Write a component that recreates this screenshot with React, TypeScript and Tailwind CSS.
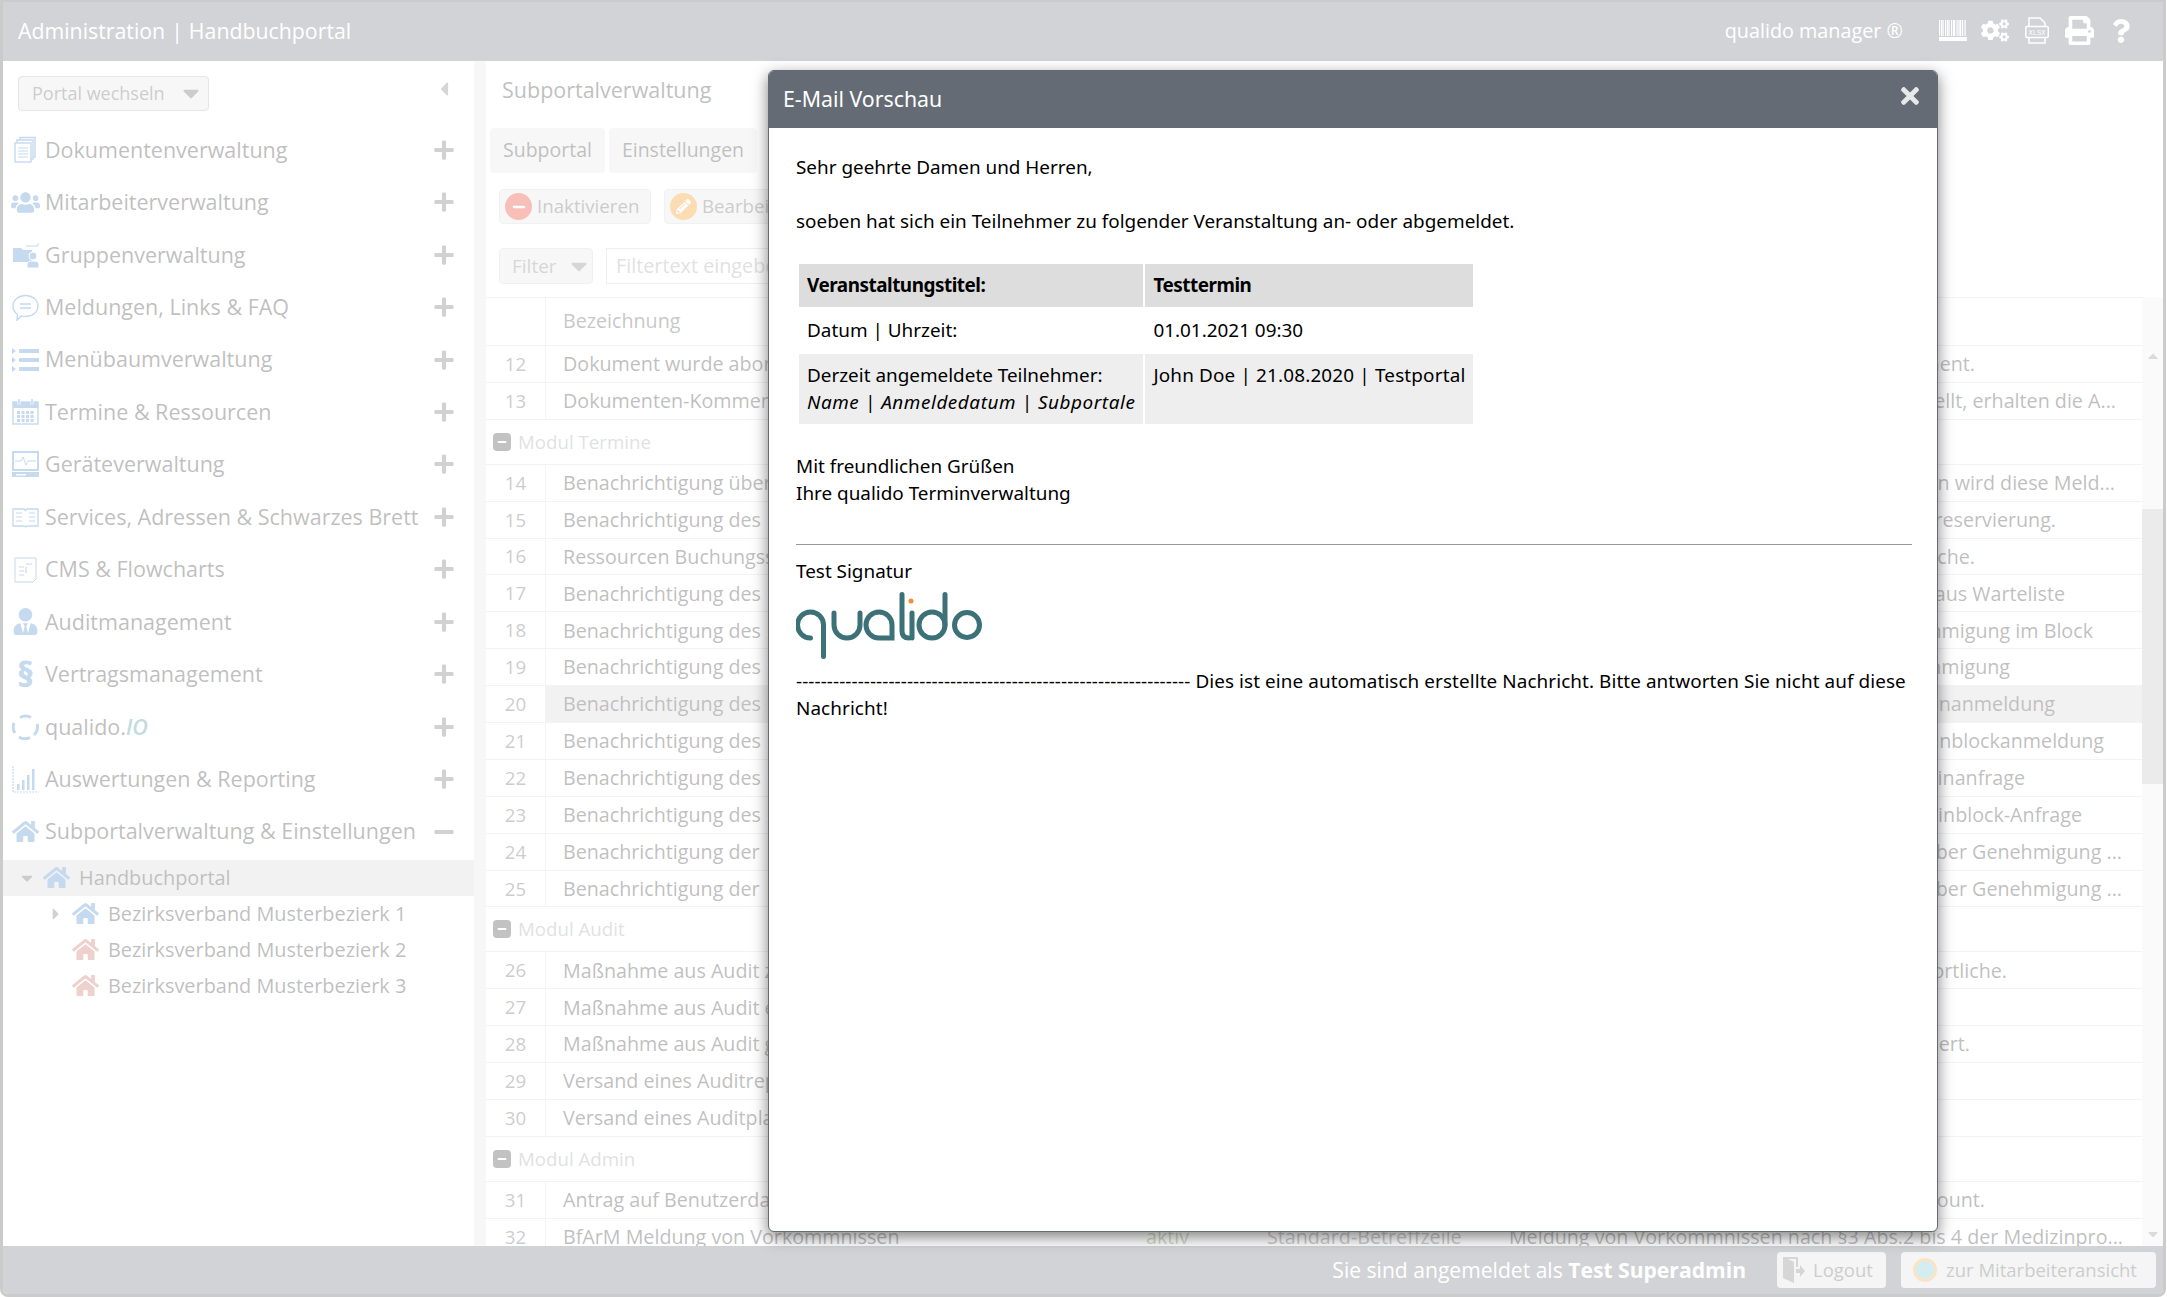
import React from "react";
import { FaUsers, FaHome, FaUserTie, FaCogs, FaPrint, FaQuestion, FaTimes, FaCaretDown, FaCaretLeft, FaCaretRight, FaCaretUp, FaPencilAlt, FaMinus, FaPlus } from "react-icons/fa";

const Svg = ({ children, className = "" }: { children: React.ReactNode; className?: string }) => (
  <svg viewBox="0 0 27 27" className={"h-[27px] w-[27px] text-[#3e80c9] " + className} fill="none" stroke="currentColor" strokeWidth="1.4">{children}</svg>
);

const DocIcon = () => (
  <Svg>
    <path d="M8 4V1.5h15V21h-2M5 7V4h16v19h-2" />
    <rect x="3" y="7" width="16" height="19" fill="white" />
    <path d="M6 12h10M6 15h10M6 18h10M6 21h10" strokeWidth="1" />
  </Svg>
);
const FolderIcon = () => (
  <Svg>
    <path d="M1 7h8l2 2h9v12H1z" fill="currentColor" stroke="none" />
    <path d="M14 5h12V2" strokeWidth="1" />
    <circle cx="21" cy="15" r="4" fill="currentColor" stroke="white" strokeWidth="1" />
    <path d="M15 27v-4q0-3 6-3t6 3v4z" fill="currentColor" stroke="white" strokeWidth="1" />
  </Svg>
);
const ChatIcon = () => (
  <Svg>
    <path d="M13.5 1.5c7 0 12.5 4.500 12.500 10.500S20.500 22.500 13.500 22.500c-1.500 0-3-.2-4-.6L5 26l.5-5.500C2.800 18.500 1 15.500 1 12 1 6 6.500 1.500 13.500 1.500z" />
    <path d="M8 10h11M8 14h11" />
  </Svg>
);
const ListIcon = () => (
  <Svg>
    <g fill="currentColor" stroke="none">
      <rect x="7" y="3" width="20" height="4" /><rect x="7" y="12" width="20" height="4" /><rect x="7" y="21" width="20" height="4" />
      <path d="M0 2l4 3-4 3zM0 11l4 3-4 3zM0 20l4 3-4 3z" />
    </g>
  </Svg>
);
const CalIcon = () => (
  <Svg>
    <rect x="1" y="4" width="25" height="22" />
    <rect x="1" y="4" width="25" height="6" fill="currentColor" stroke="none" />
    <path d="M7 1v6M20 1v6" stroke="white" strokeWidth="3" />
    <path d="M7 1v6M20 1v6" strokeWidth="1.500" />
    <g fill="currentColor" stroke="none">
      {[5, 9.500, 14, 18.500].map((x) => [13, 17, 21].map((y) => <rect key={x + "-" + y} x={x} y={y} width="3" height="3" />))}
    </g>
  </Svg>
);
const MonitorIcon = () => (
  <Svg>
    <rect x="1" y="1" width="25" height="18" strokeWidth="2" />
    <path d="M3 10h6l2-4 3 8 2-4h8" strokeWidth="1" />
    <rect x="0" y="21" width="27" height="5" fill="currentColor" stroke="none" />
    <rect x="4" y="23" width="10" height="1.500" fill="white" stroke="none" />
  </Svg>
);
const BookIcon = () => (
  <Svg>
    <path d="M1 6h11l1.500 1.500L15 6h11v17H15l-1.500 1L12 23H1z" />
    <path d="M4 10h6M4 14h6M4 18h6M17 10h6M17 14h6M17 18h6" strokeWidth="1.200" />
  </Svg>
);
const FlowIcon = () => (
  <Svg>
    <path d="M3 2h21v21l-3 3H3z" strokeWidth="1" />
    <path d="M7 11h5M7 15h5M7 19h5M14 8h6M14 11l0 6" strokeWidth="1.200" />
  </Svg>
);
const IoIcon = () => (
  <Svg>
    <path d="M8 4.500a11 11 0 0 1 11 0M25 11a11 11 0 0 1-3 11M18 24.500a11 11 0 0 1-11-.5M3 20a11 11 0 0 1-1-10" strokeWidth="3" />
  </Svg>
);
const ChartIcon = () => (
  <Svg>
    <path d="M1 0v26h26" strokeWidth="1.200" strokeDasharray="2 1" />
    <g fill="currentColor" stroke="none">
      <rect x="5" y="18" width="2.500" height="6" /><rect x="10" y="14" width="2.500" height="10" /><rect x="15" y="9" width="2.500" height="15" /><rect x="20" y="3" width="2.500" height="21" />
    </g>
  </Svg>
);
const Para = () => <span className="block w-[27px] text-center font-['Open_Sans',sans-serif] text-[34px] leading-[27px] font-extrabold text-[#3e80c9]">§</span>;
const B = (I: any, cls = "h-[27px] w-[27px]") => <I className={cls + " text-[#3e80c9]"} />;

const nav: [React.ReactNode, React.ReactNode][] = [
  [<DocIcon />, "Dokumentenverwaltung"],
  [B(FaUsers, "-mx-[1px] h-[29px] w-[29px]"), "Mitarbeiterverwaltung"],
  [<FolderIcon />, "Gruppenverwaltung"],
  [<ChatIcon />, "Meldungen, Links & FAQ"],
  [<ListIcon />, "Menübaumverwaltung"],
  [<CalIcon />, "Termine & Ressourcen"],
  [<MonitorIcon />, "Geräteverwaltung"],
  [<BookIcon />, "Services, Adressen & Schwarzes Brett"],
  [<FlowIcon />, "CMS & Flowcharts"],
  [B(FaUserTie), "Auditmanagement"],
  [<Para />, "Vertragsmanagement"],
  [<IoIcon />, <>qualido.<i className="font-semibold text-[#2a8a85]">IO</i></>],
  [<ChartIcon />, "Auswertungen & Reporting"],
  [B(FaHome), "Subportalverwaltung & Einstellungen"],
];

type Row = { n: number; t: string; d: string; e?: number };
type Item = Row | { g: string };
const items: Item[] = [
  { n: 12, t: "Dokument wurde abonniert", d: "Benachrichtigung über ein neues Dokument.", e: 1976 },
  { n: 13, t: "Dokumenten-Kommentar", d: "Wird ein Kommentar erstellt, erhalten die A...", e: 2117 },
  { g: "Modul Termine" },
  { n: 14, t: "Benachrichtigung über Termine", d: "Bei neuen Terminen wird diese Meld...", e: 2116 },
  { n: 15, t: "Benachrichtigung des\u00A0\u00A0Buchers", d: "Bestätigung der Ressourcenreservierung.", e: 2057 },
  { n: 16, t: "Ressourcen Buchungsstatus", d: "Status der Buchung in dieser Woche.", e: 1976 },
  { n: 17, t: "Benachrichtigung des\u00A0\u00A0Teilnehmers", d: "Nachrücken aus Warteliste", e: 2066 },
  { n: 18, t: "Benachrichtigung des\u00A0\u00A0Teilnehmers", d: "Terminbuchung Genehmigung im Block", e: 2094 },
  { n: 19, t: "Benachrichtigung des\u00A0\u00A0Teilnehmers", d: "Terminbuchung Genehmigung", e: 2011 },
  { n: 20, t: "Benachrichtigung des\u00A0\u00A0Teilnehmers", d: "Bestätigung der Terminanmeldung", e: 2056 },
  { n: 21, t: "Benachrichtigung des\u00A0\u00A0Teilnehmers", d: "Bestätigung der Terminblockanmeldung", e: 2105 },
  { n: 22, t: "Benachrichtigung des\u00A0\u00A0Genehmigers", d: "Eingang einer Terminanfrage", e: 2026 },
  { n: 23, t: "Benachrichtigung des\u00A0\u00A0Genehmigers", d: "Eingang einer Termineinblock-Anfrage", e: 2083 },
  { n: 24, t: "Benachrichtigung der\u00A0\u00A0Teilnehmer", d: "Information über Genehmigung ...", e: 2123 },
  { n: 25, t: "Benachrichtigung der\u00A0\u00A0Teilnehmer", d: "Information über Genehmigung ...", e: 2123 },
  { g: "Modul Audit" },
  { n: 26, t: "Maßnahme aus Audit zugewiesen", d: "Benachrichtigung an Verantwortliche.", e: 2008 },
  { n: 27, t: "Maßnahme aus Audit erledigt", d: "" },
  { n: 28, t: "Maßnahme aus Audit geändert", d: "Die Maßnahme wurde geändert.", e: 1971 },
  { n: 29, t: "Versand eines Auditreports", d: "" },
  { n: 30, t: "Versand eines Auditplans", d: "" },
  { g: "Modul Admin" },
  { n: 31, t: "Antrag auf Benutzerdaten", d: "Antrag auf einen neuen Account.", e: 1986 },
  { n: 32, t: "BfArM Meldung von Vorkommnissen", d: "Meldung von Vorkommnissen nach §3 Abs.2 bis 4 der Medizinpro...", e: 2124 },
];

const Qualido = () => (
  <svg viewBox="0 0 186 67" className="h-[67px] w-[186px]" fill="none" stroke="#3b7177" strokeWidth="5" strokeLinecap="round">
    <path d="M27.500 33A13 13 0 1 0 14.500 46M27.500 33V64.500" />
    <path d="M38 21V33A13 13 0 0 0 64 33V21" />
    <path d="M96 33A13 13 0 1 0 83 46H96V33" />
    <path d="M106 2.500V39Q106 46 113 46" />
    <path d="M116 21V46" />
    <circle cx="115" cy="9" r="2.500" fill="#f28c2e" stroke="none" />
    <circle cx="136" cy="33" r="13" />
    <path d="M149 2.500V33" />
    <circle cx="171" cy="33" r="12.500" />
  </svg>
);

export default function App() {
  return (
    <div className="relative h-[1297px] w-[2167px] overflow-hidden bg-white font-['Open_Sans',sans-serif] text-[#2b2b2b]">
      <div className="flex h-full w-[2166px] flex-col overflow-hidden rounded-b-lg border-x-[3px] border-t-2 border-b-[3px] border-[#505050] bg-[#e3e3e3]">
        <header className="flex h-[59px] shrink-0 items-center bg-[#656b75] pr-[33px] pb-[2px] pl-[15px] text-white">
          <span className="text-[21.300px]">Administration<span className="mx-[6px]">|</span>Handbuchportal</span>
          <span className="ml-auto text-[19.800px]">qualido manager ®</span>
          <div className="ml-[36px] flex items-center">
            <svg viewBox="0 0 28 21" className="h-[21px] w-[28px]" fill="white">
              {[0, 2, 3.500, 6, 8, 9.500, 12, 14, 15, 17.500, 19.500, 21, 23, 25.500].map((x) => <rect key={x} x={x} y="0" width="1.200" height="16" />)}
              <rect x="0" y="17" width="28" height="4" />
            </svg>
            <FaCogs className="ml-[14px] h-[25px] w-[28px]" />
            <svg viewBox="0 0 24 27" className="ml-[16px] h-[27px] w-[24px]" fill="none" stroke="white" strokeWidth="1.500">
              <path d="M4 9V1h11l5 5v3M4 21v5h16v-5" />
              <rect x="0.800" y="9.500" width="22.500" height="11" rx="1.500" />
              <text x="12" y="17.500" textAnchor="middle" fontSize="7" fill="white" stroke="none" fontFamily="Liberation Mono">XLSX</text>
            </svg>
            <FaPrint className="ml-[16px] h-[29px] w-[29px]" />
            <FaQuestion className="ml-[18px] h-[28px] w-[18px]" />
          </div>
        </header>

        <div className="flex min-h-0 flex-1">
          <aside className="w-[471px] shrink-0 bg-white">
            <div className="flex h-[62.500px] items-center pl-[15px]">
              <div className="flex h-[35px] w-[191px] translate-y-[1px] items-center rounded border border-[#aaaaaa] bg-[#e3e3e3] pl-[13px] text-[18px] text-[#555]">
                Portal wechseln
                <FaCaretDown className="ml-[13px] h-[26px] w-[26px]" />
              </div>
              <FaCaretLeft className="ml-[226px] h-[22px] w-[18px] -translate-y-[3px] text-[#777]" />
            </div>
            <nav>
              {nav.map(([icon, label], i) => (
                <div key={i} className="flex h-[52.460px] items-center pr-[19px] pl-[9px]">
                  {icon}
                  <span className="ml-[6px] text-[21.500px] whitespace-nowrap">{label}</span>
                  {i === 13 ? <FaMinus className="ml-auto h-[22px] w-[22px] text-[#666]" /> : <FaPlus className="ml-auto h-[22px] w-[22px] text-[#666]" />}
                </div>
              ))}
            </nav>
            <div className="mt-[2px] flex h-[36px] items-center bg-[#d4d4d4] pl-[15px]">
              <FaCaretDown className="h-[18px] w-[18px] text-[#555]" />
              <FaHome className="ml-[7px] h-[27px] w-[27px] text-[#3e80c9]" />
              <span className="ml-[9px] text-[19.900px]">Handbuchportal</span>
            </div>
            {["Bezirksverband Musterbezierk 1", "Bezirksverband Musterbezierk 2", "Bezirksverband Musterbezierk 3"].map((t, i) => (
              <div key={t} className="flex h-[36px] items-center pl-[46px]">
                <span className="w-[16px]">{i === 0 && <FaCaretRight className="h-[18px] w-[14px] text-[#666]" />}</span>
                <FaHome className={"ml-[7px] h-[27px] w-[27px] " + (i === 0 ? "text-[#3e80c9]" : "text-[#c66255]")} />
                <span className="ml-[9px] text-[19.900px]">{t}</span>
              </div>
            ))}
          </aside>
          <div className="w-[12px] shrink-0 bg-[#e3e3e3]" />
          <main className="flex min-w-0 flex-1 flex-col bg-white">
            <h1 className="mb-[9px] flex h-[58px] shrink-0 items-center pl-[16px] text-[21.500px] font-normal">Subportalverwaltung</h1>
            <div className="flex h-[45px] shrink-0 gap-[4px] pl-[4px] text-[19.500px]">
              <div className="flex w-[115px] items-center justify-center rounded bg-[#e3e3e3] pb-[2px]">Subportal</div>
              <div className="flex w-[148px] items-center justify-center rounded bg-[#e3e3e3] pb-[2px]">Einstellungen</div>
            </div>
            <div className="mt-[16px] flex h-[35px] shrink-0 gap-[13px] pl-[13px] text-[18.700px] text-[#555]">
              <div className="flex w-[152px] items-center rounded border border-[#d0d0d0] bg-[#e3e3e3] pl-[5px]">
                <span className="flex h-[27px] w-[27px] items-center justify-center rounded-full bg-[#e72912] text-white"><FaMinus className="h-[14px] w-[14px]" /></span>
                <span className="ml-[5px]">Inaktivieren</span>
              </div>
              <div className="flex w-[152px] items-center rounded border border-[#d0d0d0] bg-[#e3e3e3] pl-[5px]">
                <span className="flex h-[27px] w-[27px] items-center justify-center rounded-full bg-[#f28a00] text-white"><FaPencilAlt className="h-[15px] w-[15px]" /></span>
                <span className="ml-[5px]">Bearbeiten</span>
              </div>
            </div>
            <div className="mt-[24px] flex h-[36px] shrink-0 gap-[13px] pl-[13px] text-[19px]">
              <div className="flex w-[94px] items-center rounded border border-[#d0d0d0] bg-[#e3e3e3] pl-[12px] text-[#777]">
                Filter
                <FaCaretDown className="ml-[9px] h-[26px] w-[26px]" />
              </div>
              <div className="flex w-[400px] items-center border border-[#c8c8c8] pl-[9px] text-[19.800px] text-[#999]">Filtertext eingeben</div>
            </div>
            <div className="mt-[13px] flex min-h-0 flex-1">
              <div className="min-w-0 flex-1 overflow-hidden text-[19.700px]">
                <div className="flex h-[49px] items-center border-y border-[#d8d8d8]">
                  <div className="h-full w-[60px] border-r border-[#d8d8d8]" />
                  <div className="pb-[2px] pl-[17px] text-[#444]">Bezeichnung</div>
                </div>
                {items.map((it, i) =>
                  "g" in it ? (
                    <div key={i} className="flex h-[45px] items-center border-b border-[#d8d8d8] pl-[7px] text-[18.700px]">
                      <span className="flex h-[18px] w-[18px] items-center justify-center rounded-sm bg-[#333] text-white"><FaMinus className="h-[10px] w-[10px]" /></span>
                      <span className="ml-[7px] text-[#999]">{it.g}</span>
                    </div>
                  ) : (
                    <div key={i} className="flex h-[36.900px] items-center border-b border-[#d8d8d8]">
                      <div className="flex h-full w-[60px] shrink-0 items-center justify-center border-r border-[#d8d8d8] text-[18.700px] text-[#555]">{it.n}</div>
                      <div className={"flex h-full min-w-0 flex-1 items-center " + (it.n === 20 ? "bg-[#d4d4d4]" : "")}>
                        <div className="w-[584px] shrink-0 truncate pl-[17px]">{it.t}</div>
                        <div className="w-[121px] shrink-0 pl-[16px] text-[#5b8a3a]">aktiv</div>
                        <div className="w-[241px] shrink-0 truncate pl-[16px] text-[#555]">Standard-Betreffzeile</div>
                        <div className="min-w-0 flex-1 overflow-hidden whitespace-nowrap" style={{ paddingRight: it.e ? 2143 - it.e : 0 }}>
                          <div className="flex justify-end">{it.d}</div>
                        </div>
                      </div>
                    </div>
                  ),
                )}
              </div>
              <div className="flex w-[21px] shrink-0 flex-col items-center bg-[#eeeeee] pt-[49px]">
                <FaCaretUp className="mt-[2px] h-[16px] w-[16px] text-[#888]" />
                <div className="mt-[145px] h-[275px] w-full bg-[#bcbcbc]" />
                <FaCaretDown className="mt-auto mb-[4px] h-[16px] w-[16px] text-[#888]" />
              </div>
            </div>
          </main>
        </div>

        <footer className="flex h-[48px] shrink-0 items-center justify-end bg-[#656b75] pr-[7px] text-white">
          <span className="text-[21.100px]">Sie sind angemeldet als <b>Test Superadmin</b></span>
          <div className="ml-[31px] flex h-[36px] w-[109px] items-center rounded bg-[#dcdcdc] pl-[4px] text-[18.500px] text-[#555]">
            <svg viewBox="0 0 24 28" className="h-[28px] w-[24px]" fill="#777">
              <path d="M2 1h15v10h-2V3H7l6 3v21l-11-5z" />
              <path d="M15 13h4v-4l5 6-5 6v-4h-4z" />
            </svg>
            <span className="ml-[8px]">Logout</span>
          </div>
          <div className="ml-[15px] flex h-[36px] w-[255px] items-center rounded bg-[#dcdcdc] pl-[12px] text-[18.500px] text-[#555]">
            <span className="h-[24px] w-[24px] rounded-full border-[3px] border-[#f2a640] bg-[#6fc3d0]" />
            <span className="ml-[9px]">zur Mitarbeiteransicht</span>
          </div>
        </footer>
      </div>

      <div className="absolute inset-0 bg-white/70" />

      <div className="absolute top-[70px] left-[768px] flex h-[1162px] w-[1170px] flex-col overflow-hidden rounded-md border border-[#656b75] bg-white font-['Noto_Sans',sans-serif] text-[18.900px] leading-[27px] text-black shadow-[0_5px_15px_rgba(0,0,0,0.5)]">
        <div className="flex h-[57px] shrink-0 items-center justify-between bg-[#656b75] pr-[14px] pl-[14px] text-white">
          <span className="-translate-y-[1px] text-[21.300px]">E-Mail Vorschau</span>
          <FaTimes className="h-[26px] w-[26px] -translate-y-[4px] text-[#e8e8e8]" />
        </div>
        <div className="pt-[26px] pr-[25px] pl-[27px]">
          <p>Sehr geehrte Damen und Herren,</p>
          <p className="mt-[27px]">soeben hat sich ein Teilnehmer zu folgender Veranstaltung an- oder abgemeldet.</p>
          <table className="mt-[27px] ml-[1px] border-separate border-spacing-[2px]">
            <tbody>
              <tr className="bg-[#dddddd] font-bold tracking-[-0.480px]">
                <td className="px-[8px] py-[8px]">Veranstaltungstitel:</td>
                <td className="px-[8px] py-[8px]">Testtermin</td>
              </tr>
              <tr>
                <td className="px-[8px] py-[8px]">Datum | Uhrzeit:</td>
                <td className="px-[8px] py-[8px]">01.01.2021 09:30</td>
              </tr>
              <tr className="bg-[#eeeeee] align-top">
                <td className="px-[8px] py-[8px]">Derzeit angemeldete Teilnehmer:<br /><i className="tracking-[0.560px]">Name | Anmeldedatum | Subportale</i></td>
                <td className="px-[8px] py-[8px] tracking-[0.160px]">John Doe | 21.08.2020 | Testportal</td>
              </tr>
            </tbody>
          </table>
          <p className="mt-[27px]">Mit freundlichen Grüßen<br />Ihre qualido Terminverwaltung</p>
          <hr className="mt-[37px] border-t border-[#999]" />
          <p className="mt-[13px]">Test Signatur</p>
          <div className="mt-[7px]"><Qualido /></div>
          <p className="mt-[9px] tracking-[0.080px]">---------------------------------------------------------------- Dies ist eine automatisch erstellte Nachricht. Bitte antworten Sie nicht auf diese Nachricht!</p>
        </div>
      </div>
    </div>
  );
}
